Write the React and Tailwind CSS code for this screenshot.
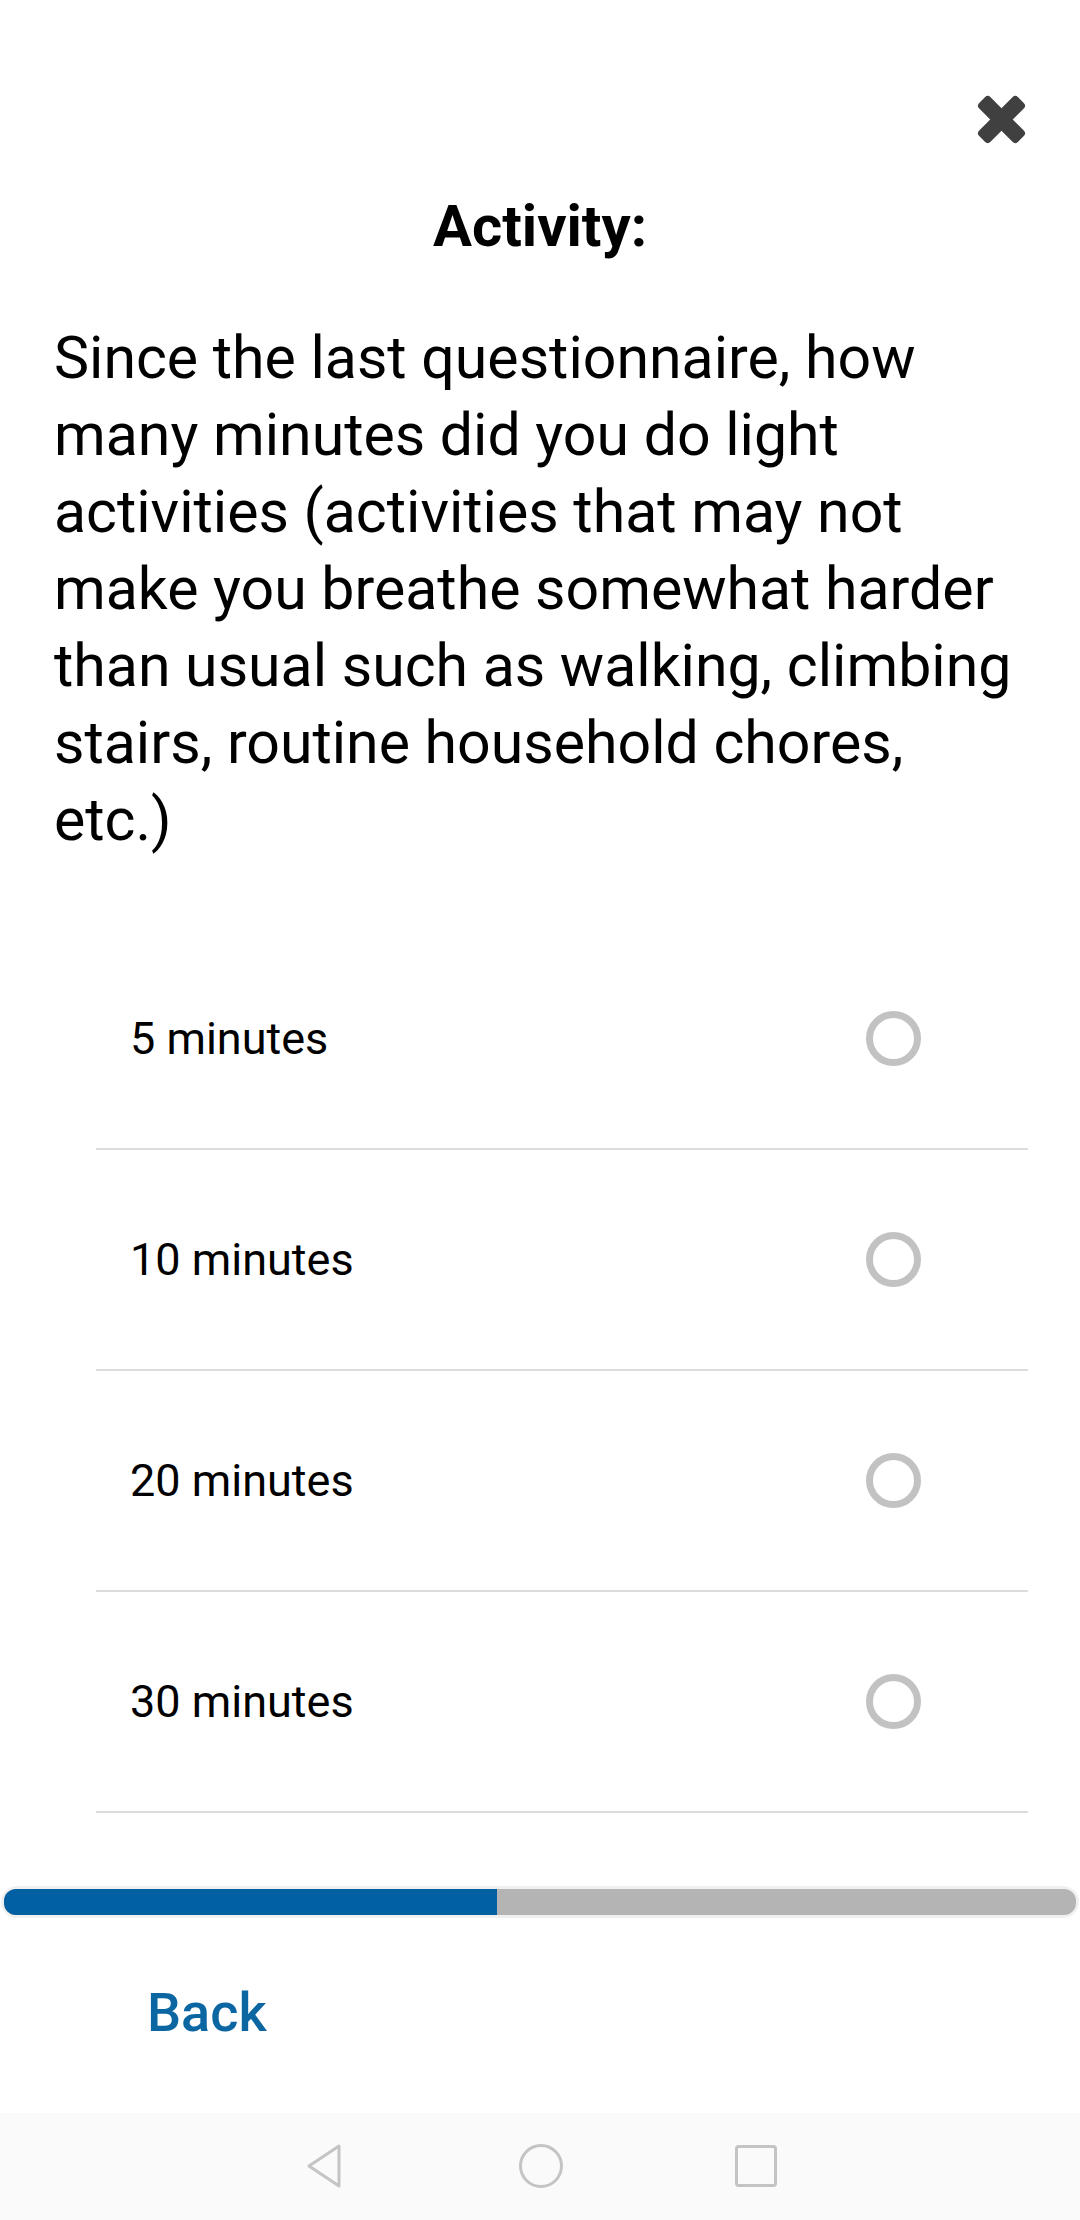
const OPTIONS = ["5 minutes", "10 minutes", "20 minutes", "30 minutes"];

const CloseIcon = () => (
  <svg width="49" height="49" viewBox="0 0 49 49">
    <g transform="rotate(45 24.5 24.5)" fill="#404040">
      <rect x="-3" y="16.5" width="55" height="16" rx="4" />
      <rect x="16.5" y="-3" width="16" height="55" rx="4" />
    </g>
  </svg>
);

const Radio = () => (
  <div className="w-[55px] h-[55px] rounded-full border-[7px] border-[#c2c2c2]" />
);

export default function App() {
  const progress = 46;

  return (
    <div
      className="w-[1080px] h-[2220px] bg-white flex flex-col overflow-hidden"
      style={{ fontFamily: "Roboto, 'Noto Sans', sans-serif" }}
    >
      {/* Close */}
      <div className="flex justify-end pr-[54px] mt-[95px] h-[49px]">
        <CloseIcon />
      </div>

      {/* Title */}
      <h1 className="mt-[49px] text-center text-[58px] leading-[66px] font-bold text-black">
        Activity:
      </h1>

      {/* Question */}
      <p className="mt-[60px] px-[54px] text-[59px] leading-[77px] text-black">
        Since the last questionnaire, how many minutes did you do light
        activities (activities that may not make you breathe somewhat harder
        than usual such as walking, climbing stairs, routine household chores,
        etc.)
      </p>

      {/* Options */}
      <div className="mt-[71px] ml-[96px] mr-[52px]">
        {OPTIONS.map((opt) => (
          <div
            key={opt}
            className="h-[221px] flex items-center justify-between pl-[34px] pr-[107px] border-b-[2px] border-[#dcdcdc]"
          >
            <span className="text-[45px] text-black">{opt}</span>
            <Radio />
          </div>
        ))}
      </div>

      {/* Progress */}
      <div className="mt-[73px] mx-[1px] p-[3px] rounded-[16px] bg-[#f0f0f0]">
        <div className="h-[26px] rounded-[12px] bg-[#b4b4b4] overflow-hidden">
          <div className="h-full bg-[#0060a1]" style={{ width: `${progress}%` }} />
        </div>
      </div>

      {/* Back */}
      <div className="mt-[63px] pl-[147px]">
        <button className="text-[54px] leading-[64px] font-medium text-[#0b66a2]">
          Back
        </button>
      </div>

      {/* Nav bar */}
      <div className="mt-auto h-[107px] bg-[#fafafa] flex items-center justify-center gap-[171px] pb-[2px]">
        <svg width="44" height="46" viewBox="0 0 44 46">
          <path
            d="M36 3 L36 43 L6 23 Z"
            fill="none"
            stroke="#c4c4c4"
            strokeWidth="3"
            strokeLinejoin="round"
          />
        </svg>
        <svg width="46" height="46" viewBox="0 0 46 46">
          <circle cx="23" cy="23" r="20.5" fill="none" stroke="#c4c4c4" strokeWidth="3" />
        </svg>
        <svg width="42" height="42" viewBox="0 0 42 42">
          <rect x="1.5" y="1.5" width="39" height="39" rx="2" fill="none" stroke="#c4c4c4" strokeWidth="3" />
        </svg>
      </div>
    </div>
  );
}
